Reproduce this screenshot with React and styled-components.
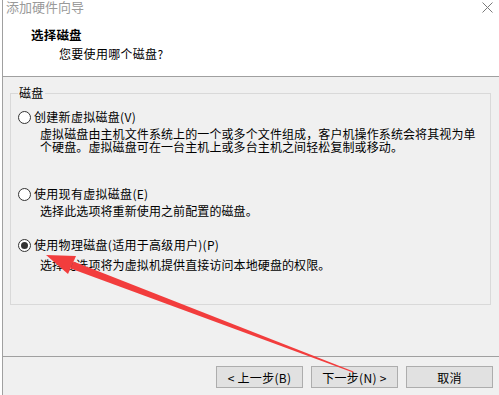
import React from 'react'
import styled, { createGlobalStyle } from 'styled-components'

const GlobalStyle = createGlobalStyle`
    html, body {
        margin: 0;
        padding: 0;
        background: #ffffff;
    }
    body {
        font-family: "Noto Sans CJK SC", "Microsoft YaHei", sans-serif;
        font-size: 12px;
        color: #000;
    }
`

const Screen = styled.div`
    position: relative;
    width: 499px;
    height: 395px;
    padding-left: 2px;
    box-sizing: border-box;
    background: #ffffff;
    overflow: hidden;
`

const Window = styled.div`
    display: flex;
    flex-direction: column;
    height: 100%;
    border-left: 1px solid #a0a0a0;
    background: #f0f0f0;
`

const Header = styled.div`
    height: 76px;
    background: #ffffff;
    border-bottom: 1px solid #a0a0a0;
    display: flex;
    flex-direction: column;
    flex-shrink: 0;
`

const TitleBar = styled.div`
    height: 18px;
    display: flex;
    align-items: flex-start;
    justify-content: space-between;
    padding: 0 6px 0 3px;

    span {
        font-size: 13px;
        line-height: 16px;
        margin-top: -1px;
        color: #9a9a9a;
    }
    svg {
        margin-top: 2px;
    }
`

const HeaderTitle = styled.div`
    margin: 9px 0 0 28px;
    font-weight: 700;
    font-size: 12.5px;
    line-height: 16px;
    letter-spacing: 0.2px;
`

const HeaderSub = styled.div`
    margin: 3px 0 0 56px;
    line-height: 16px;
    letter-spacing: 0.3px;
`

const Body = styled.div`
    height: 279px;
    padding: 9px 8px 0 7px;
    box-sizing: border-box;
    flex-shrink: 0;
`

const Group = styled.fieldset`
    margin: 0;
    height: 219px;
    box-sizing: border-box;
    border: 1px solid #d9d9d9;
    padding: 0 7px;

    legend {
        padding: 0 1px;
        line-height: 14px;
        letter-spacing: 0.3px;
    }
`

const Option = styled.div`
    margin-top: ${p => p.$top}px;
`

const OptionLabel = styled.label`
    display: flex;
    align-items: center;
    gap: 3px;
    line-height: 16px;
    letter-spacing: 0.3px;
`

const Radio = styled.span`
    width: 13px;
    height: 13px;
    box-sizing: border-box;
    border: 1px solid #333;
    border-radius: 50%;
    background: #fff;
    display: flex;
    align-items: center;
    justify-content: center;

    &::after {
        content: '';
        display: ${p => (p.$checked ? 'block' : 'none')};
        width: 7px;
        height: 7px;
        border-radius: 50%;
        background: #333;
    }
`

const Desc = styled.div`
    margin: ${p => p.$gap}px 0 0 22px;
    line-height: 13px;
    letter-spacing: 0.1px;
`

const Footer = styled.div`
    flex: 1;
    border-top: 1px solid #a0a0a0;
    display: flex;
    justify-content: flex-end;
    align-items: flex-start;
    gap: 8px;
    padding: 9px 6px 0 0;
`

const Button = styled.button`
    width: 87px;
    height: 22px;
    padding: 0;
    background: #e1e1e1;
    border: 1px solid #adadad;
    font-family: inherit;
    font-size: 12px;
    letter-spacing: 0.3px;
    color: #000;
`

const Arrow = styled.svg`
    position: absolute;
    left: 0;
    top: 0;
    pointer-events: none;
`

const options = [
    {
        label: '创建新虚拟磁盘(V)',
        desc: ['虚拟磁盘由主机文件系统上的一个或多个文件组成，客户机操作系统会将其视为单', '个硬盘。虚拟磁盘可在一台主机上或多台主机之间轻松复制或移动。'],
        top: 9,
        gap: 2,
    },
    {
        label: '使用现有虚拟磁盘(E)',
        desc: ['选择此选项将重新使用之前配置的磁盘。'],
        top: 33,
        gap: 2,
    },
    {
        label: '使用物理磁盘(适用于高级用户)(P)',
        desc: ['选择此选项将为虚拟机提供直接访问本地硬盘的权限。'],
        top: 20,
        gap: 5,
        checked: true,
    },
]

const App = () => {
    return (
        <>
            <GlobalStyle />
            <Screen>
                <Window>
                    <Header>
                        <TitleBar>
                            <span>添加硬件向导</span>
                            <svg width="11" height="11" viewBox="0 0 11 11">
                                <path d="M0.5 0.5 L10.5 10.5 M10.5 0.5 L0.5 10.5" stroke="#7a7a7a" strokeWidth="1" />
                            </svg>
                        </TitleBar>
                        <HeaderTitle>选择磁盘</HeaderTitle>
                        <HeaderSub>您要使用哪个磁盘?</HeaderSub>
                    </Header>

                    <Body>
                        <Group>
                            <legend>磁盘</legend>
                            {options.map(o => (
                                <Option key={o.label} $top={o.top}>
                                    <OptionLabel>
                                        <Radio $checked={o.checked} />
                                        {o.label}
                                    </OptionLabel>
                                    <Desc $gap={o.gap}>
                                        {o.desc.map(line => <div key={line}>{line}</div>)}
                                    </Desc>
                                </Option>
                            ))}
                        </Group>
                    </Body>

                    <Footer>
                        <Button>&lt; 上一步(B)</Button>
                        <Button>下一步(N) &gt;</Button>
                        <Button>取消</Button>
                    </Footer>
                </Window>

                <Arrow width="499" height="395" viewBox="0 0 499 395">
                    <polygon points="73.5,261.5 353.5,371.6 353,372.4 70.6,268.5" fill="#f23d3d" />
                    <polygon points="46,255 76,256 68,274" fill="#f23d3d" />
                </Arrow>
            </Screen>
        </>
    )
}

export default App
